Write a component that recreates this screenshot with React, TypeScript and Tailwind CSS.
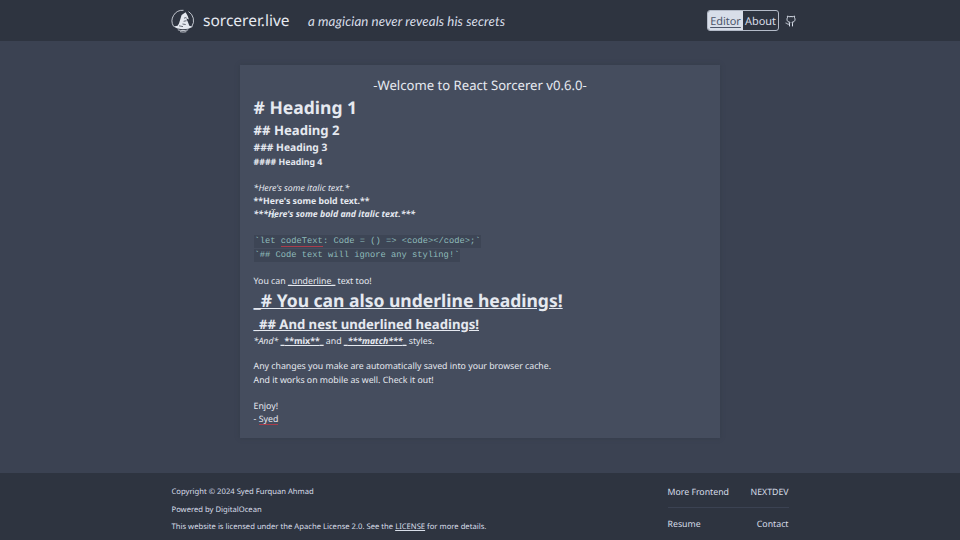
import React from "react";

type LineProps = { className: string; children?: React.ReactNode };

const Line = ({ className, children }: LineProps) => (
  <div className={`flex items-center whitespace-pre ${className}`}>
    <span>{children}</span>
  </div>
);

const base = "h-[13.12px] text-[8.75px]";

const HatLogo = () => (
  <svg className="h-6 w-6 shrink-0" viewBox="0 0 24 24" fill="none" stroke="#e5e9f0" strokeWidth=".8">
    <path d="M2.6 17.4A10.6 10.6 0 0 1 12.5 1.3M17.5 2.6A10.6 10.6 0 0 1 20.9 17.4" />
    <path fill="#e5e9f0" stroke="none" d="M14.6 3.2 10.6 6 8 14.4 6.6 16.8 2.4 17.6l4 1.8 5.3.9 5.7-.6 4.6-2-3.7-.9-1.3-3.5-1.8-4 2.7 1.3-1.2-3.6z" />
    <path stroke="#2e3440" strokeWidth=".7" d="m13 9.2 2.4-.8M12.6 12.3l3-.6M11.5 15l3.2.5M8 16.8l4 .8" />
    <path d="M6.8 20.8c3 1 7.4 1 10.4 0M9 22.7c2 .5 4.4.5 6.4 0" />
  </svg>
);

const GithubIcon = () => (
  <svg className="h-[12px] w-[12px] shrink-0" viewBox="0 0 24 24" fill="none" stroke="#d8dee9" strokeWidth="2" strokeLinecap="round" strokeLinejoin="round">
    <path d="M15 22v-4a4.8 4.8 0 0 0-1-3.5c3 0 6-2 6-5.5.08-1.25-.27-2.48-1-3.5.28-1.15.28-2.35 0-3.5 0 0-1 0-3 1.5-2.64-.5-5.36-.5-8 0C6 2 5 2 5 2c-.3 1.15-.3 2.35 0 3.5A5.403 5.403 0 0 0 4 9c0 3.5 3 5.5 6 5.5-.39.49-.68 1.05-.85 1.65-.17.6-.22 1.23-.15 1.85v4M9 18c-4.51 2-5-2-7-2" />
  </svg>
);

const Misspelt = ({ children }: { children: React.ReactNode }) => (
  <span className="inline-block border-b border-[#a93c4b] leading-[9px]">{children}</span>
);

const Code = ({ children }: { children: React.ReactNode }) => (
  <span className="block h-[13px] bg-[#3d4555] px-[1px] font-['Liberation_Mono',monospace] text-[8.75px] leading-[13px] text-[#8fbcbb]">{children}</span>
);

export default function App() {
  return (
    <div className="flex h-[540px] w-[960px] flex-col overflow-hidden bg-[#3b4252] font-['Noto_Sans',sans-serif] text-[#d8dee9] [text-rendering:geometricPrecision]">
      <header className="flex h-[41px] shrink-0 items-center bg-[#2e3440] pl-[171px] pr-[163px]">
        <HatLogo />
        <span className="ml-[8px] w-[105px] whitespace-nowrap pb-px text-[15.5px] leading-[22px] text-[#e5e9f0]">sorcerer.live</span>
        <span className="whitespace-nowrap font-['Lato',sans-serif] text-[13.3px] italic leading-[20px] tracking-[0.08px]">a magician never reveals his secrets</span>
        <nav className="ml-auto flex h-[21px] w-[72px] shrink-0 overflow-hidden rounded-[3px] border border-[#b4bbc8] text-[10.94px] leading-[21px]">
          <span className="w-[35px] bg-[#d8dee9] text-center text-[#4c566a] underline underline-offset-2">Editor</span>
          <span className="flex-1 text-center">About</span>
        </nav>
        <span className="ml-[6px]"><GithubIcon /></span>
      </header>
      <main className="flex flex-1 justify-center pt-[24px]">
        <section className="h-[373px] w-[480px] bg-[#454d5e] px-[13.6px] pt-[8.5px] text-[#e5e9f0] shadow-[0_0_4px_#353c4a]">
          <div className="h-[22.2px] text-center text-[13.12px] leading-[22px]">-Welcome to React Sorcerer v0.6.0-</div>
          <Line className="h-[24px] text-[17.5px] font-bold"># Heading 1</Line>
          <Line className="h-[21.8px] text-[13.12px] font-bold">## Heading 2</Line>
          <Line className="h-[14.5px] text-[10.24px] font-bold">### Heading 3</Line>
          <Line className="h-[12.5px] text-[8.75px] font-bold">#### Heading 4</Line>
          <Line className={base} />
          <Line className={`${base} italic`}>*Here's some italic text.*</Line>
          <Line className={`${base} font-bold`}>**Here's some bold text.**</Line>
          <div className="relative">
            <Line className={`${base} font-bold italic`}>***Here's some bold and italic text.***</Line>
            <svg className="absolute left-[17px] top-[1px] h-[9px] w-[5px]" viewBox="0 0 5 9" fill="none" stroke="#cfd2c4" strokeWidth="0.8">
              <path d="M.5.5h1.6l.4.4.4-.4h1.6M2.5 1v7M.5 8.5h1.6l.4-.4.4.4h1.6" />
            </svg>
          </div>
          <Line className="h-[14px]" />
          <Line className="h-[13.7px]"><Code>`let <Misspelt>codeText</Misspelt>: Code = () =&gt; &lt;code&gt;&lt;/code&gt;;`</Code></Line>
          <Line className="h-[13.7px]"><Code>`## Code text will ignore any styling!`</Code></Line>
          <Line className="h-[12.3px]" />
          <Line className={base}>You can <u>_underline_</u> text too!</Line>
          <Line className="h-[26px] text-[17.5px] font-bold"><u>_# You can also underline headings!</u></Line>
          <Line className="h-[21.5px] text-[13.12px] font-bold"><u>_## And nest underlined headings!</u></Line>
          <Line className="h-[12.12px] text-[8.75px]"><i>*And*</i> <u>_<b>**mix**</b>_</u> and <u>_<b><i>***match***</i></b>_</u> styles.</Line>
          <Line className={base} />
          <Line className={base}>Any changes you make are automatically saved into your browser cache.</Line>
          <Line className={base}>And it works on mobile as well. Check it out!</Line>
          <Line className={base} />
          <Line className={base}>Enjoy!</Line>
          <Line className={base}>- <Misspelt>Syed</Misspelt></Line>
        </section>
      </main>
      <footer className="flex h-[67px] shrink-0 justify-between bg-[#2e3440] pl-[171.5px] pr-[171.5px]">
        <div className="pt-[11px] text-[7.66px] leading-[17.5px]">
          <p>Copyright © 2024 Syed Furquan Ahmad</p>
          <p>Powered by DigitalOcean</p>
          <p>This website is licensed under the Apache License 2.0. See the <u>LICENSE</u> for more details.</p>
        </div>
        <div className="w-[121px] pt-[3px] text-[8.75px]">
          <div className="flex h-[32px] items-center justify-between border-b border-[#3b4252] pt-[2px]"><span>More Frontend</span><span>NEXTDEV</span></div>
          <div className="flex h-[32px] items-center justify-between pt-[1px]"><span>Resume</span><span>Contact</span></div>
        </div>
      </footer>
    </div>
  );
}
